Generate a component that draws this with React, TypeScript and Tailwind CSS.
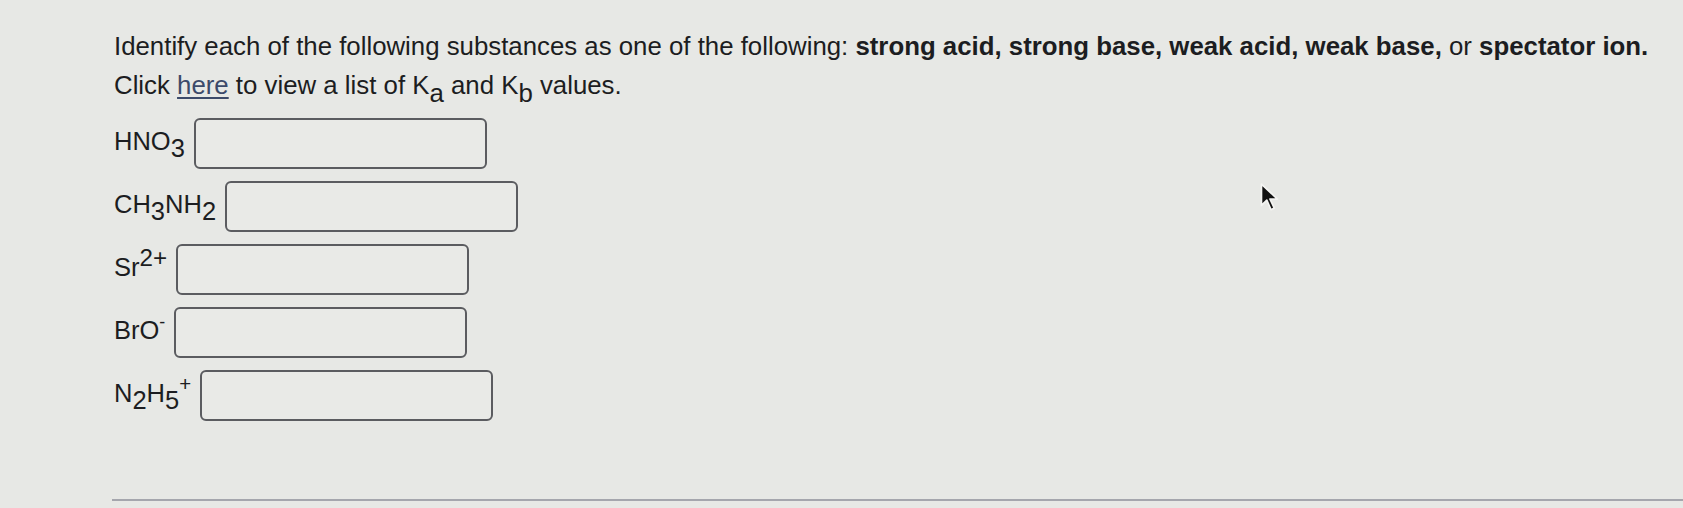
import React from 'react';

// same-size subscripts / superscripts, shifted without touching the line box
const Sub = ({ children }: { children: React.ReactNode }) => <span className="relative top-[0.3em]">{children}</span>;

const rows = [
  { id: 'hno3', label: <>HNO<Sub>3</Sub></> },
  { id: 'ch3nh2', label: <>CH<Sub>3</Sub>NH<Sub>2</Sub></> },
  { id: 'sr', label: <>Sr<span className="relative top-[-0.42em] text-[0.95em]">2+</span></> },
  { id: 'bro', label: <>BrO<span className="relative top-[-0.62em] text-[0.7em]">-</span></> },
  { id: 'n2h5', label: <>N<Sub>2</Sub>H<Sub>5</Sub><span className="relative top-[-0.55em] text-[0.8em]">+</span></> },
];

function Cursor() {
  return (
    <svg className="absolute left-[1258px] top-[182px]" width="24" height="32" viewBox="0 0 22 30">
      <path d="M3 2 L3 22 L8 17 L12 26 L15 24.5 L11 16 L18 16 Z" fill="#111" stroke="#f4f4f2" strokeWidth="1.6" strokeLinejoin="round" />
    </svg>
  );
}

export default function App() {
  return (
    <div className="relative w-[1683px] h-[508px] overflow-hidden bg-[#e7e8e5] text-[#1c1d21] flex flex-col pl-[112px] pt-[27px] pb-[7px]" style={{ fontFamily: '"Liberation Sans", Arial, sans-serif' }}>
      <div className="pl-[2px] text-[25.8px] leading-[39px]">
        <p className="whitespace-nowrap">
          Identify each of the following substances as one of the following:{' '}
          <b>strong acid, strong base, weak acid, weak base,</b> or <b>spectator ion.</b>
        </p>
        <p className="whitespace-nowrap">
          Click <span className="text-[#3c4a6a] underline underline-offset-[3px] decoration-[1.5px]">here</span> to view a list of K
          <Sub>a</Sub> and K<Sub>b</Sub> values.
        </p>

        <div className="mt-[13px] flex flex-col gap-[12px] text-[25.5px]">
          {rows.map((r) => (
            <div key={r.id} className="flex items-center gap-[9px]">
              <span className="relative top-[-0.08em] leading-none whitespace-nowrap">{r.label}</span>
              <div className="w-[293px] h-[51px] rounded-[6px] border-2 border-[#5b5c60] bg-[#e9eae7]" />
            </div>
          ))}
        </div>
      </div>

      <div className="mt-auto h-[2px] bg-[#a5a6ad]" />
      <Cursor />
    </div>
  );
}
